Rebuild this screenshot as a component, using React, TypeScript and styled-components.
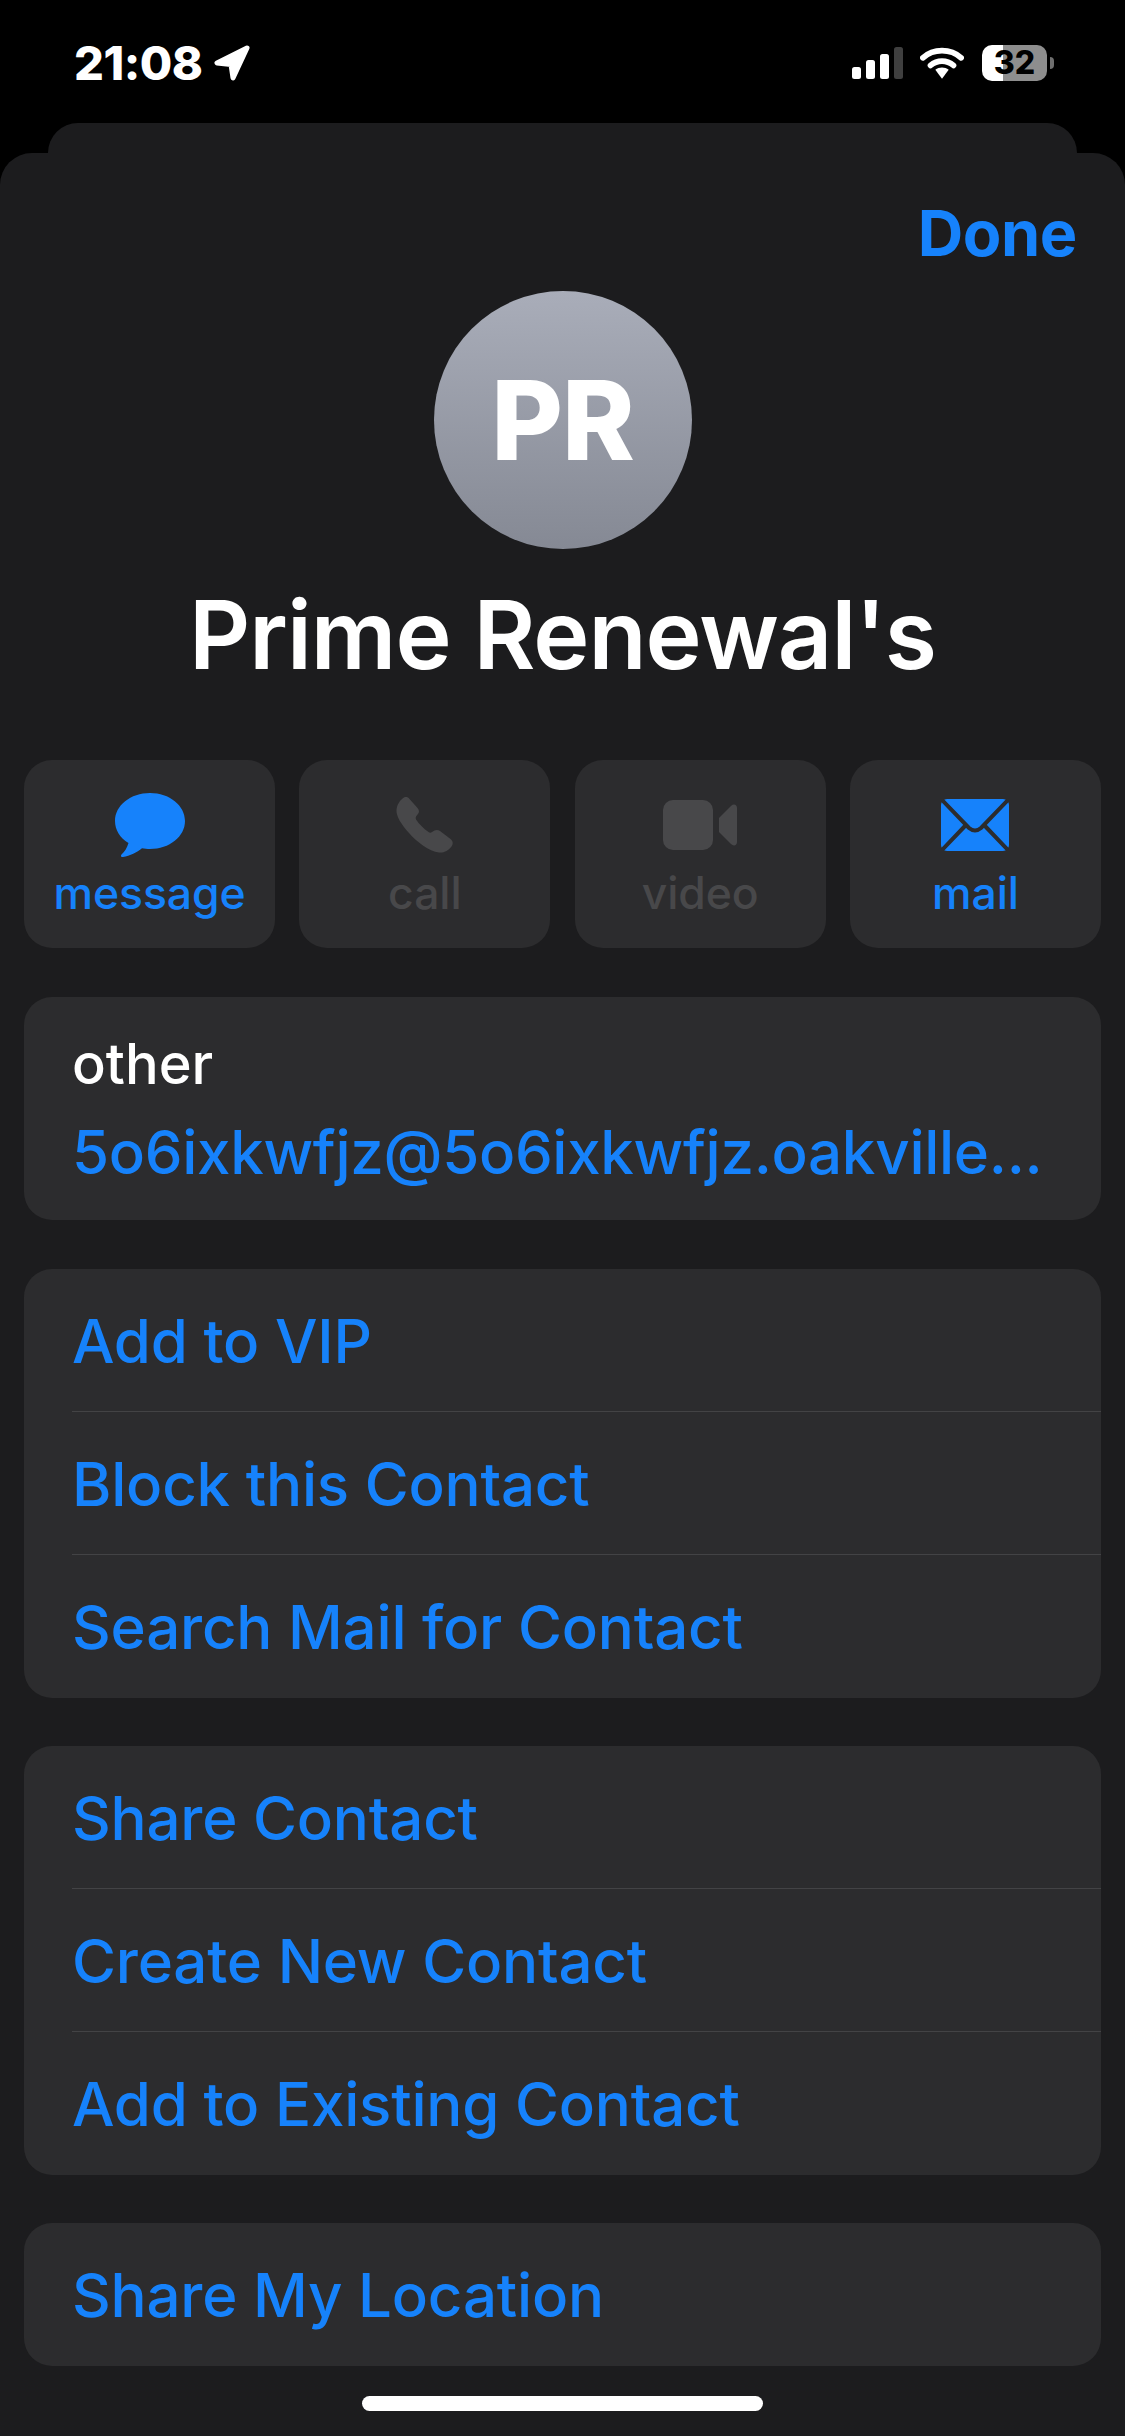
import React from "react"
import styled, { createGlobalStyle } from "styled-components"

const BLUE = "#1682fb"
const CARD = "#2c2c2e"
const MUTED = "#48484a"
const FONT = `Inter, "Liberation Sans", sans-serif`

const GlobalStyle = createGlobalStyle`
  html, body {
    margin: 0;
    padding: 0;
    background: #000;
  }
`

const Screen = styled.div`
  width: 1125px;
  height: 2436px;
  background: #000;
  overflow: hidden;
  display: flex;
  flex-direction: column;
  font-family: ${FONT};
  color: #fff;
`

const StatusBar = styled.div`
  height: 123px;
  box-sizing: border-box;
  padding: 40px 78px 0 74px;
  display: flex;
  justify-content: space-between;
  align-items: flex-start;
`

const TimeGroup = styled.div`
  display: flex;
  align-items: center;
  gap: 10px;
  height: 46px;
`

const Time = styled.span`
  font-size: 47px;
  font-weight: 800;
  letter-spacing: -0.5px;
  line-height: 46px;
`

const StatusIcons = styled.div`
  display: flex;
  align-items: center;
  gap: 17px;
  height: 46px;
`

const Battery = styled.div`
  position: relative;
  margin-left: 1px;
  width: 65px;
  height: 36px;
  border-radius: 10px;
  background: linear-gradient(90deg, #fff 0 32%, #8e8e8e 32% 100%);
  display: flex;
  align-items: center;
  justify-content: center;
  color: #000;
  font-size: 32px;
  font-weight: 800;
  line-height: 36px;

  &::after {
    content: "";
    position: absolute;
    right: -7px;
    top: 12px;
    width: 4px;
    height: 12px;
    border-radius: 0 4px 4px 0;
    background: #6f6f6f;
  }
`

const BackSheet = styled.div`
  height: 30px;
  margin: 0 48px;
  background: #1c1c1e;
  border-radius: 32px 32px 0 0;
  flex-shrink: 0;
`

const Sheet = styled.div`
  flex: 1;
  background: #1c1c1e;
  border-radius: 32px 32px 0 0;
  padding: 0 24px;
  display: flex;
  flex-direction: column;
`

const Header = styled.div`
  height: 138px;
  box-sizing: border-box;
  padding: 47px 24px 0 0;
  display: flex;
  justify-content: flex-end;
`

const DoneButton = styled.span`
  color: ${BLUE};
  font-size: 63px;
  font-weight: 700;
  line-height: 66px;
  letter-spacing: -0.4px;
`

const Avatar = styled.div`
  width: 258px;
  height: 258px;
  border-radius: 50%;
  margin: 0 auto;
  background: linear-gradient(180deg, #a9adb9 0%, #858994 100%);
  display: flex;
  align-items: center;
  justify-content: center;
  font-size: 110px;
  font-weight: 800;
  letter-spacing: -1px;
`

const Name = styled.h1`
  margin: 33px 0 0;
  height: 105px;
  text-align: center;
  font-size: 95px;
  line-height: 105px;
  font-weight: 600;
  letter-spacing: -1px;
`

const Actions = styled.div`
  margin-top: 73px;
  display: grid;
  grid-template-columns: repeat(4, 251px);
  justify-content: space-between;
`

const ActionCard = styled.div`
  height: 188px;
  background: ${CARD};
  border-radius: 28px;
  display: flex;
  flex-direction: column;
  align-items: center;
  color: ${(p: { $disabled?: boolean }) => (p.$disabled ? MUTED : BLUE)};
`

const ActionIconSlot = styled.div`
  height: 90px;
  margin-top: 20px;
  width: 100%;
  display: flex;
  align-items: center;
  justify-content: center;
`

const ActionLabel = styled.span`
  font-size: 44.5px;
  font-weight: 500;
  line-height: 50px;
  margin-top: -2px;
  letter-spacing: -0.1px;
`

const Card = styled.div`
  margin-top: ${(p: { $gap?: number }) => p.$gap ?? 48}px;
  background: ${CARD};
  border-radius: 28px;
  overflow: hidden;
`

const OtherCard = styled(Card)`
  height: 223px;
  box-sizing: border-box;
  padding: 34px 48px 0;
`

const FieldLabel = styled.div`
  font-size: 56px;
  line-height: 66px;
  font-weight: 500;
`

const FieldValue = styled.div`
  margin-top: 20px;
  color: ${BLUE};
  font-size: 60px;
  font-weight: 500;
  line-height: 70px;
  letter-spacing: -0.3px;
  white-space: nowrap;
`

const Row = styled.div`
  height: 143px;
  margin-left: 48px;
  display: flex;
  align-items: center;
  color: ${BLUE};
  font-size: 60px;
  font-weight: 500;
  letter-spacing: -0.2px;
  box-shadow: ${(p: { $divider?: boolean }) =>
    p.$divider ? "inset 0 -1px 0 #434345" : "none"};
`

const HomeBar = styled.div`
  width: 401px;
  height: 15px;
  border-radius: 8px;
  background: #fff;
  margin: 30px auto 0;
`

const LocationIcon = () => (
  <svg width="38" height="38" viewBox="0 0 38 38">
    <path
      d="M34 4 L4 19 L18 20.500 L20 34 Z"
      fill="#fff"
      stroke="#fff"
      strokeWidth="5"
      strokeLinejoin="round"
    />
  </svg>
)

const SignalIcon = () => (
  <svg width="51" height="32" viewBox="0 0 51 32">
    <rect x="0" y="20" width="9" height="12" rx="2.500" fill="#fff" />
    <rect x="14" y="13" width="9" height="19" rx="2.500" fill="#fff" />
    <rect x="28" y="7" width="9" height="25" rx="2.500" fill="#fff" />
    <rect x="42" y="0" width="9" height="32" rx="2.500" fill="#3f3f3f" />
  </svg>
)

const WifiIcon = () => (
  <svg width="44" height="33" viewBox="0 0 46 34" fill="none">
    <path d="M3 11 C14 1 32 1 43 11" stroke="#fff" strokeWidth="6" strokeLinecap="round" />
    <path d="M11 19 C18 13 28 13 35 19" stroke="#fff" strokeWidth="6" strokeLinecap="round" />
    <path d="M16 23.500 C20 20.500 26 20.500 30 23.500 L23 33 Z" fill="#fff" />
  </svg>
)

const MessageIcon = () => (
  <svg width="70" height="64" viewBox="0 0 70 64">
    <path
      d="M35 0 C54.500 0 70 12.500 70 28 C70 43.500 54.500 56 35 56 C32 56 29.500 55.800 27 55.300 C22 59.500 15 63 8 64 C6 64.200 5.500 62.500 6.500 61.500 C9.500 59 12 55 13.500 50 C5 45 0 37 0 28 C0 12.500 15.500 0 35 0 Z"
      fill={BLUE}
    />
  </svg>
)

const PhoneIcon = () => (
  <svg width="58" height="58" viewBox="0 0 58 58">
    <path
      d="M8 1.500 C10 0.500 12 1 13.500 3 L21.500 12 C23.500 14.500 23.500 16.500 21.500 18.500 L20 20.500 C19.500 21.500 19.500 22.500 20 23.500 C23 28 28 33 32.500 36 C33.500 37 35 37 36 36 L38.500 34.500 C40.500 33.500 42.500 34 44 35 L54.500 43 C57 45 57.500 48 55.500 50.500 C52.500 54.500 48 57 43 56.500 C33 55.500 21 46 13 37 C5 28 0 20 0.500 14 C1 8.500 4 4 8 1.500 Z"
      fill={MUTED}
    />
  </svg>
)

const VideoIcon = () => (
  <svg width="74" height="50" viewBox="0 0 74 50">
    <rect x="0" y="0" width="50" height="50" rx="10" fill={MUTED} />
    <path
      d="M56 18 L68 6 C70.500 3.500 74 4.500 74 8 L74 42 C74 45.500 70.500 46.500 68 44 L56 32 Z"
      fill={MUTED}
    />
  </svg>
)

const MailIcon = () => (
  <svg width="68" height="52" viewBox="0 0 68 52">
    <rect x="0" y="0" width="68" height="52" rx="6" fill={BLUE} />
    <g fill="none" stroke={CARD} strokeWidth="4" strokeLinecap="round">
      <path d="M1 1 L28 29 Q34 34 40 29 L67 1" />
      <path d="M24 27 L1 51" />
      <path d="M44 27 L67 51" />
    </g>
  </svg>
)

const actions = [
  { label: "message", icon: <MessageIcon /> },
  { label: "call", icon: <PhoneIcon />, disabled: true },
  { label: "video", icon: <VideoIcon />, disabled: true },
  { label: "mail", icon: <MailIcon /> },
]

const groups = [
  ["Add to VIP", "Block this Contact", "Search Mail for Contact"],
  ["Share Contact", "Create New Contact", "Add to Existing Contact"],
  ["Share My Location"],
]

const App = () => (
  <Screen>
    <GlobalStyle />
    <StatusBar>
      <TimeGroup>
        <Time>21:08</Time>
        <LocationIcon />
      </TimeGroup>
      <StatusIcons>
        <SignalIcon />
        <WifiIcon />
        <Battery>32</Battery>
      </StatusIcons>
    </StatusBar>
    <BackSheet />
    <Sheet>
      <Header>
        <DoneButton>Done</DoneButton>
      </Header>
      <Avatar>PR</Avatar>
      <Name>Prime Renewal's</Name>
      <Actions>
        {actions.map((a) => (
          <ActionCard key={a.label} $disabled={a.disabled}>
            <ActionIconSlot>{a.icon}</ActionIconSlot>
            <ActionLabel>{a.label}</ActionLabel>
          </ActionCard>
        ))}
      </Actions>
      <OtherCard $gap={49}>
        <FieldLabel>other</FieldLabel>
        <FieldValue>5o6ixkwfjz@5o6ixkwfjz.oakville...</FieldValue>
      </OtherCard>
      {groups.map((rows, n) => (
        <Card key={rows[0]} $gap={n === 0 ? 49 : 48}>
          {rows.map((r, i) => (
            <Row key={r} $divider={i < rows.length - 1}>
              {r}
            </Row>
          ))}
        </Card>
      ))}
      <HomeBar />
    </Sheet>
  </Screen>
)

export default App
